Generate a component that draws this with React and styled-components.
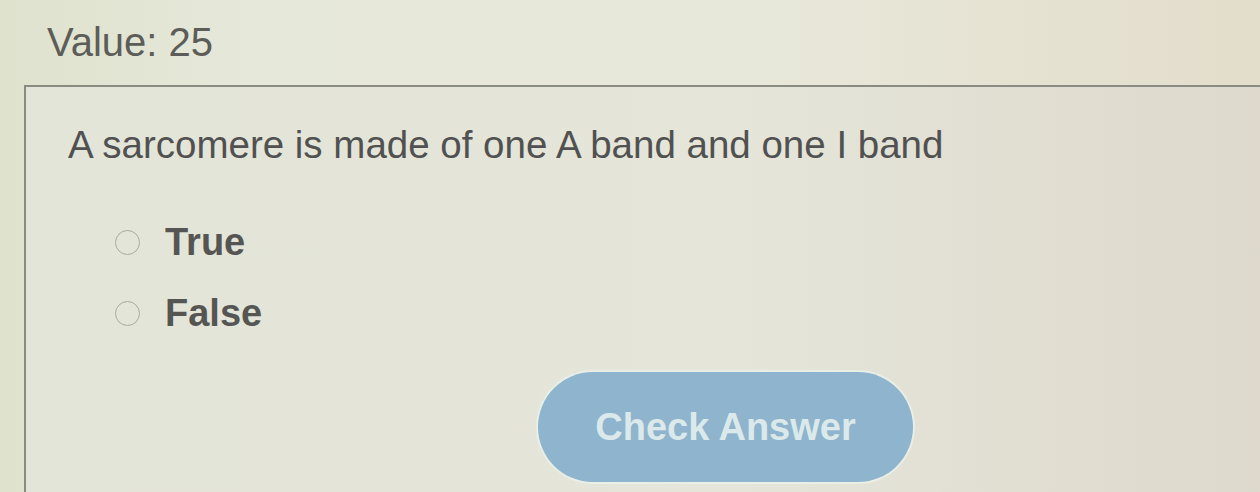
import React, { useState } from 'react'
import styled, { createGlobalStyle } from 'styled-components'

const GlobalStyle = createGlobalStyle`
  html, body {
    margin: 0;
    padding: 0;
    background: #e3e5d5;
    overflow: hidden;
  }
  body {
    font-family: "Liberation Sans", Arial, sans-serif;
  }
`

const Page = styled.div`
  width: 1260px;
  height: 492px;
  background: linear-gradient(90deg, #dfe2cd 0%, #e6e8da 20%, #e8e8da 60%, #e3ddcb 100%);
  overflow: hidden;
`

const ValueLabel = styled.div`
  padding: 20px 0 0 47px;
  font-size: 40px;
  line-height: 44px;
  color: #5c5d58;
`

const Card = styled.div`
  margin: 21px 0 0 24px;
  width: 1300px;
  height: 460px;
  box-sizing: border-box;
  border: 2px solid #8a8b82;
  background: linear-gradient(90deg, #e3e5d8 0%, #e5e5d9 55%, #ddd8cb 100%);
  padding: 36px 0 0 42px;
`

const Question = styled.p`
  margin: 0;
  font-size: 38.5px;
  line-height: 44px;
  color: #505150;
`

const Options = styled.div`
  display: flex;
  flex-direction: column;
  gap: 33px;
  margin: 56px 0 0 47px;
`

const Option = styled.label`
  display: flex;
  align-items: center;
  gap: 25px;
  cursor: pointer;
  font-size: 38px;
  line-height: 38px;
  font-weight: 700;
  color: #555653;
`

const Radio = styled.span`
  width: 25px;
  height: 25px;
  box-sizing: border-box;
  border-radius: 50%;
  border: 1.5px solid #a9aba0;
  background: ${p => (p.checked ? '#8fb3cc' : 'transparent')};
  flex-shrink: 0;
`

const Actions = styled.div`
  display: flex;
  margin: 40px 0 0 470px;
`

const CheckButton = styled.button`
  width: 375px;
  height: 110px;
  border: none;
  border-radius: 55px;
  background: #8fb4cd;
  box-shadow: 0 0 0 2px #e9eee6;
  color: #dce9ea;
  font-family: "Liberation Sans", Arial, sans-serif;
  font-size: 38px;
  font-weight: 700;
  cursor: pointer;
`

export default function App() {
  const [answer, setAnswer] = useState(null)

  return (
    <Page>
      <GlobalStyle />
      <ValueLabel>Value: 25</ValueLabel>
      <Card>
        <Question>A sarcomere is made of one A band and one I band</Question>
        <Options>
          {['True', 'False'].map(opt => (
            <Option key={opt} onClick={() => setAnswer(opt)}>
              <Radio checked={answer === opt} />
              {opt}
            </Option>
          ))}
        </Options>
        <Actions>
          <CheckButton>Check Answer</CheckButton>
        </Actions>
      </Card>
    </Page>
  )
}
